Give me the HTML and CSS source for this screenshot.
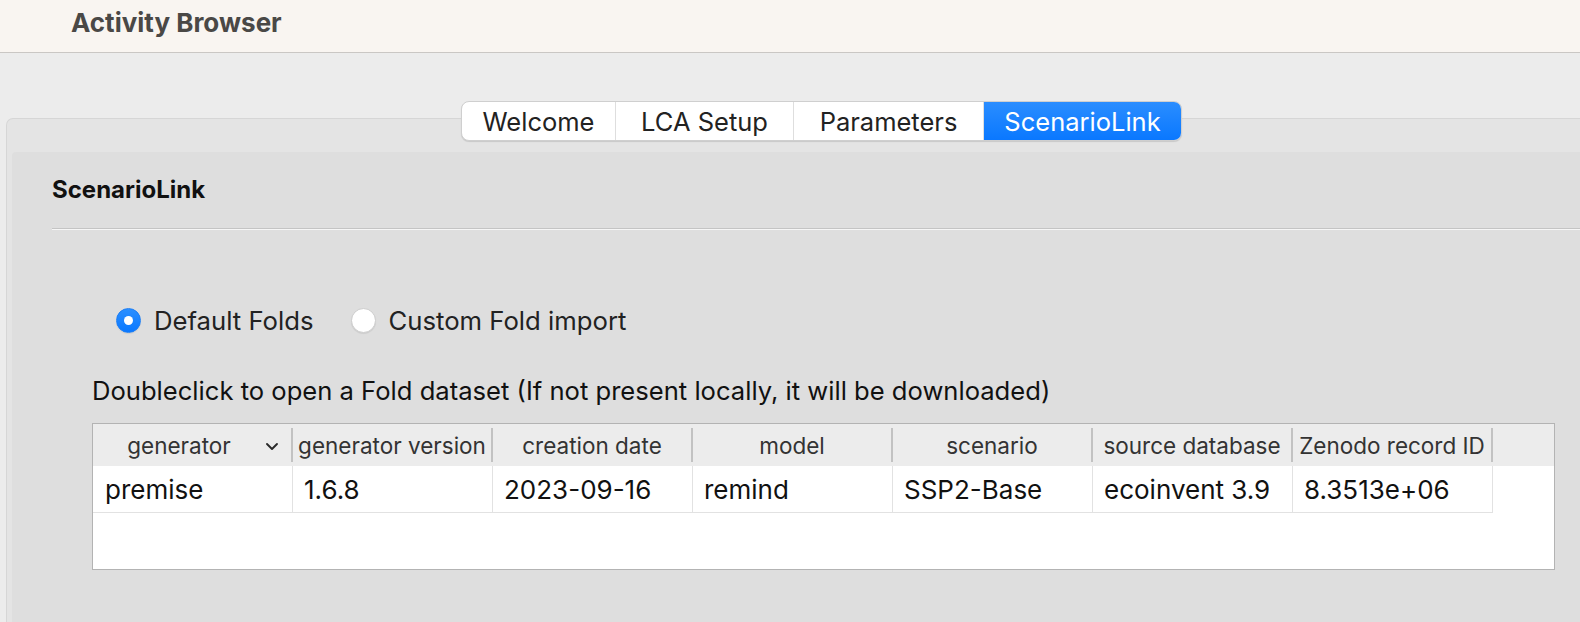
FILE: index.html
```html
<!DOCTYPE html>
<html>
<head>
<meta charset="utf-8">
<title>Activity Browser</title>
<link rel="stylesheet" href="styles.css">
</head>
<body>
<div class="titlebar"><span class="app-title">Activity Browser</span></div>
<div class="workspace">
  <div class="tabbar">
    <div class="tab">Welcome</div>
    <div class="tab">LCA Setup</div>
    <div class="tab">Parameters</div>
    <div class="tab active">ScenarioLink</div>
  </div>
  <div class="pane">
    <div class="panel">
      <div class="panel-head">ScenarioLink</div>
      <div class="separator"></div>
      <div class="content">
        <div class="radios">
          <label class="radio"><span class="dot checked"></span><span>Default Folds</span></label>
          <label class="radio"><span class="dot"></span><span>Custom Fold import</span></label>
        </div>
        <div class="hint">Doubleclick to open a Fold dataset (If not present locally, it will be downloaded)</div>
        <div class="table">
          <div class="thead">
            <div class="th sorted"><span class="th-label">generator</span><svg class="chev" width="14" height="9" viewBox="0 0 14 9"><polyline points="2,2 7,7 12,2" fill="none" stroke="#2a2a2a" stroke-width="1.9" stroke-linecap="round" stroke-linejoin="round"/></svg></div>
            <div class="th">generator version</div>
            <div class="th">creation date</div>
            <div class="th">model</div>
            <div class="th">scenario</div>
            <div class="th">source database</div>
            <div class="th">Zenodo record ID</div>
          </div>
          <div class="tr">
            <div class="td">premise</div>
            <div class="td">1.6.8</div>
            <div class="td">2023-09-16</div>
            <div class="td">remind</div>
            <div class="td">SSP2-Base</div>
            <div class="td">ecoinvent 3.9</div>
            <div class="td">8.3513e+06</div>
          </div>
        </div>
      </div>
    </div>
  </div>
</div>
</body>
</html>
```
FILE: styles.css
```css
* { box-sizing: border-box; }
html, body { margin: 0; padding: 0; }
body {
  width: 1580px;
  height: 622px;
  overflow: hidden;
  background: #ececec;
  font-family: Inter, "Noto Sans", "Liberation Sans", sans-serif;
  color: #1a1a1a;
}
.titlebar {
  height: 53px;
  background: #f9f5f1;
  border-bottom: 1px solid #cac7c4;
  display: flex;
  align-items: center;
  padding-left: 71px;
  padding-bottom: 7px;
}
.app-title {
  font-weight: 700;
  font-size: 26px;
  color: #4a4846;
}
.workspace {
  padding-top: 48px;
  padding-left: 6px;
}
.tabbar {
  position: relative;
  z-index: 2;
  display: flex;
  width: 721px;
  height: 40px;
  margin-left: 455px;
  background: #fff;
  border: 1px solid #cfcfcf;
  border-radius: 8px;
  box-shadow: 0 1px 1px rgba(0,0,0,0.12);
  overflow: hidden;
}
.tab {
  display: flex;
  align-items: center;
  justify-content: center;
  font-size: 25.5px;
  color: #222;
  border-right: 1px solid #dedede;
}
.tab:nth-child(1) { width: 154px; }
.tab:nth-child(2) { width: 178px; }
.tab:nth-child(3) { width: 190px; }
.tab.active {
  flex: 1;
  border-right: none;
  color: #fff;
  background: linear-gradient(#2a8dff, #0a78ff);
}
.pane {
  margin-top: -23px;
  height: 520px;
  background: #e4e4e4;
  border: 1px solid #d6d6d6;
  border-right: none;
  border-radius: 7px 0 0 0;
  padding: 33px 0 0 5px;
}
.panel {
  height: 100%;
  background: #dedede;
  border-radius: 4px 0 0 0;
}
.panel-head {
  height: 76px;
  padding-left: 40px;
  padding-bottom: 2px;
  display: flex;
  align-items: center;
  font-size: 24px;
  font-weight: 700;
  color: #111;
}
.separator {
  margin-left: 40px;
  height: 2px;
  border-top: 1px solid #c4c4c4;
  background: #f6f6f6;
}
.content {
  padding-left: 80px;
}
.radios {
  display: flex;
  align-items: center;
  gap: 37px;
  margin-top: 78px;
  margin-left: 24px;
  height: 24px;
}
.radio {
  display: flex;
  align-items: center;
  gap: 13px;
  font-size: 25.7px;
  color: #222;
}
.dot {
  width: 25px;
  height: 25px;
  border-radius: 50%;
  background: #fff;
  border: 1px solid #cdcdcd;
  box-shadow: 0 1px 1px rgba(0,0,0,0.08);
  display: flex;
  align-items: center;
  justify-content: center;
}
.dot.checked {
  background: linear-gradient(#2b8fff, #0a78ff);
  border-color: #1a7df5;
}
.dot.checked::after {
  content: "";
  width: 9px;
  height: 9px;
  border-radius: 50%;
  background: #fff;
}
.hint {
  margin-top: 44px;
  height: 30px;
  line-height: 30px;
  font-size: 25.6px;
  color: #111;
}
.table {
  margin-top: 17px;
  width: 1463px;
  height: 147px;
  background: #fff;
  border: 1px solid #b3b3b3;
}
.thead {
  display: flex;
  height: 42px;
  background: #ececec;
  align-items: center;
}
.th {
  width: 200px;
  height: 34px;
  display: flex;
  align-items: center;
  justify-content: center;
  font-size: 22.5px;
  color: #333;
  border-right: 2px solid #c2c2c2;
}
.th.sorted {
  justify-content: flex-start;
}
.th-label {
  width: 172px;
  text-align: center;
}
.chev { margin-top: 2px; }
.tr {
  display: flex;
  height: 47px;
}
.td {
  width: 200px;
  display: flex;
  align-items: center;
  padding-left: 11px;
  font-size: 26px;
  color: #111;
  border-right: 1px solid #e2e2e2;
  border-bottom: 1px solid #e2e2e2;
}
.td:first-child { padding-left: 12px; }
```
